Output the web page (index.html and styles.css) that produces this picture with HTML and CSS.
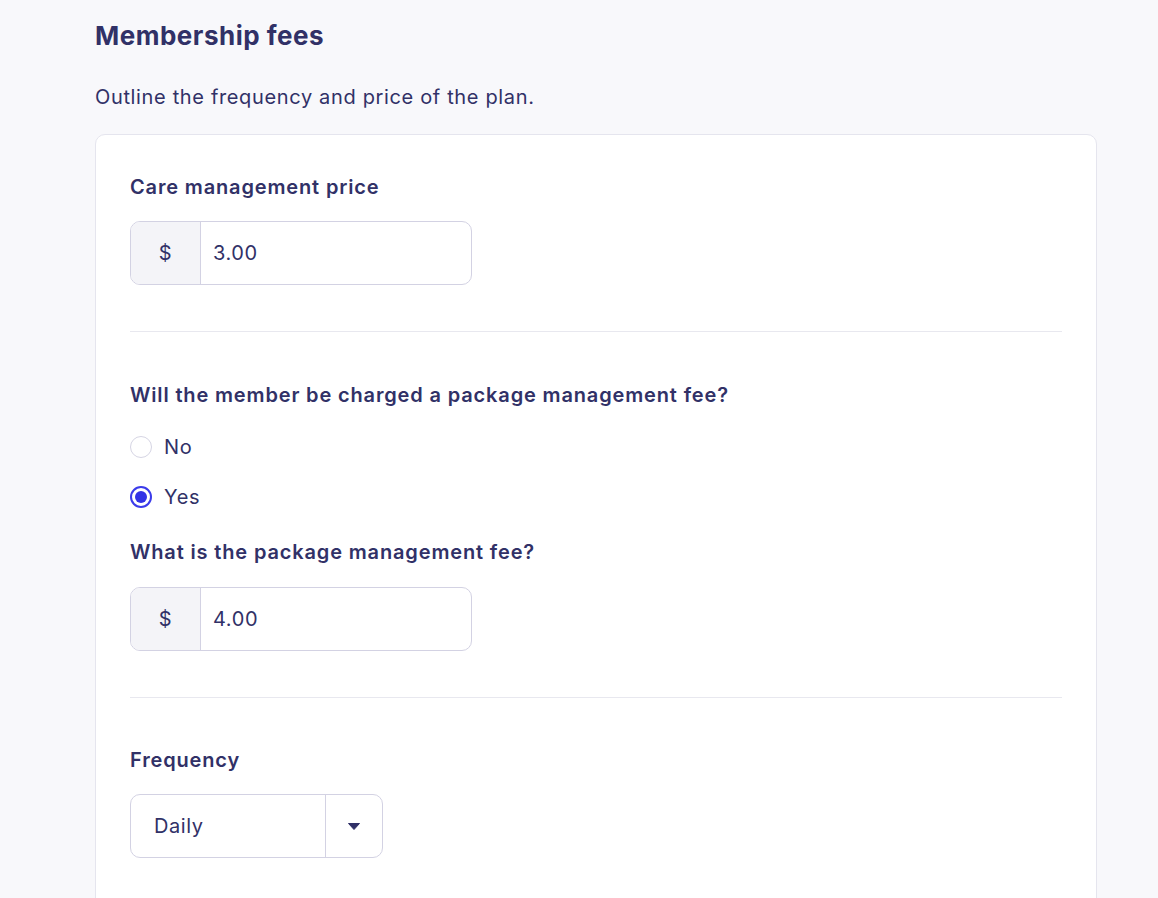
FILE: index.html
```html
<!DOCTYPE html>
<html>
<head>
<meta charset="utf-8">
<link rel="stylesheet" href="styles.css">
</head>
<body>
<main class="page">
  <h1 class="title">Membership fees</h1>
  <p class="subtitle">Outline the frequency and price of the plan.</p>
  <section class="card">
    <div class="section">
      <div class="label">Care management price</div>
      <div class="money">
        <span class="prefix">$</span>
        <span class="value">3.00</span>
      </div>
    </div>
    <div class="section">
      <div class="label q">Will the member be charged a package management fee?</div>
      <div class="radios">
        <div class="radio-row"><span class="radio"></span><span>No</span></div>
        <div class="radio-row"><span class="radio checked"></span><span>Yes</span></div>
      </div>
      <div class="label sub">What is the package management fee?</div>
      <div class="money">
        <span class="prefix">$</span>
        <span class="value">4.00</span>
      </div>
    </div>
    <div class="section last">
      <div class="label">Frequency</div>
      <div class="select">
        <span class="select-value">Daily</span>
        <span class="select-btn"><svg width="12" height="7" viewBox="0 0 12 7"><path d="M0.5 0.5 H11.5 L6 6.5 Z" fill="#2f2f67" stroke="#2f2f67" stroke-linejoin="round"/></svg></span>
      </div>
    </div>
  </section>
</main>
</body>
</html>
```

FILE: styles.css
```css
* { box-sizing: border-box; }
html, body { margin: 0; padding: 0; }
body {
  background: #f8f8fb;
  font-family: Inter, "Noto Sans", sans-serif;
  color: #313167;
  height: 898px;
  overflow: hidden;
}
.page {
  padding: 20px 61px 0 95px;
}
.title {
  margin: 0;
  font-size: 26px;
  line-height: 32px;
  font-weight: 700;
  letter-spacing: 0.5px;
}
.subtitle {
  margin: 31px 0 0;
  font-size: 20px;
  line-height: 28px;
  font-weight: 400;
  letter-spacing: 0.65px;
}
.card {
  margin-top: 23px;
  background: #fff;
  border: 1px solid #e5e5ee;
  border-radius: 10px;
  padding: 38px 34px 60px;
  min-height: 800px;
}
.section {
  padding-bottom: 46px;
  border-bottom: 1px solid #e8e8ef;
}
.section + .section { padding-top: 49px; }
.section.last { border-bottom: none; padding-top: 48px; }
.label {
  font-size: 20px;
  line-height: 28px;
  font-weight: 600;
  letter-spacing: 0.85px;
  margin-bottom: 20px;
}
.label.q { margin-bottom: 24px; }
.label.sub { margin-top: 27px; margin-bottom: 21px; }
.money {
  display: flex;
  width: 342px;
  height: 64px;
  border: 1px solid #d3d2e3;
  border-radius: 10px;
  overflow: hidden;
  font-size: 20px;
  letter-spacing: 0.6px;
}
.prefix {
  width: 70px;
  display: flex;
  align-items: center;
  justify-content: center;
  background: #f4f4f8;
  border-right: 1px solid #d3d2e3;
}
.value {
  display: flex;
  align-items: center;
  padding-left: 12px;
}
.radios {
  display: flex;
  flex-direction: column;
  gap: 22px;
}
.radio-row {
  display: flex;
  align-items: center;
  gap: 12px;
  font-size: 20px;
  line-height: 28px;
  letter-spacing: 0.6px;
}
.radio {
  width: 22px;
  height: 22px;
  border-radius: 50%;
  border: 1.5px solid #d6d5e4;
  background: #fff;
  display: flex;
  align-items: center;
  justify-content: center;
}
.radio.checked { border: 2px solid #3b3bea; }
.radio.checked::after {
  content: "";
  width: 12px;
  height: 12px;
  border-radius: 50%;
  background: #3232e6;
}
.select {
  display: flex;
  width: 253px;
  height: 64px;
  border: 1px solid #d3d2e3;
  border-radius: 10px;
  font-size: 20px;
  letter-spacing: 0.6px;
}
.select-value {
  flex: 1;
  display: flex;
  align-items: center;
  padding-left: 23px;
  border-right: 1px solid #d3d2e3;
}
.select-btn {
  width: 56px;
  display: flex;
  align-items: center;
  justify-content: center;
}
```
